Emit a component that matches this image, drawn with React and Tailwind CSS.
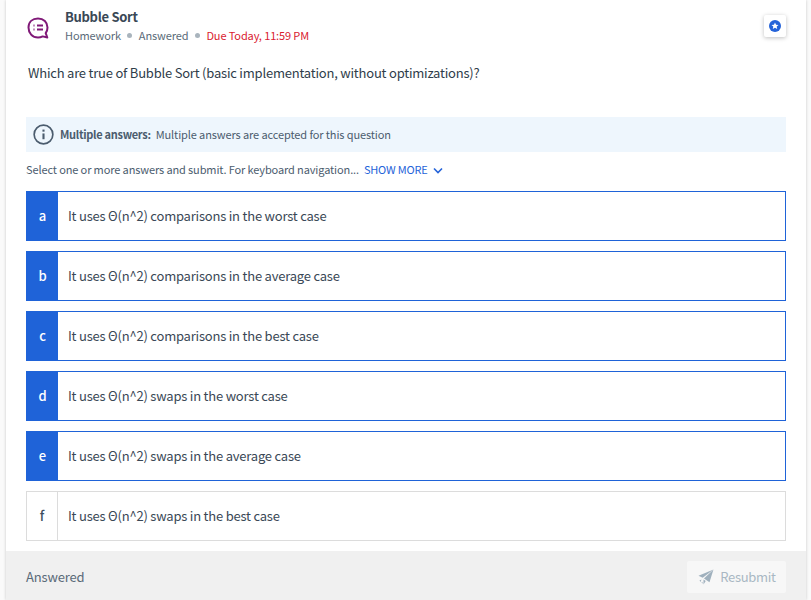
import React from 'react';

const answers = [
    { key: 'a', text: 'It uses Θ(n^2) comparisons in the worst case', checked: true },
    { key: 'b', text: 'It uses Θ(n^2) comparisons in the average case', checked: true },
    { key: 'c', text: 'It uses Θ(n^2) comparisons in the best case', checked: true },
    { key: 'd', text: 'It uses Θ(n^2) swaps in the worst case', checked: true },
    { key: 'e', text: 'It uses Θ(n^2) swaps in the average case', checked: true },
    { key: 'f', text: 'It uses Θ(n^2) swaps in the best case', checked: false },
];

/* ─── SVG Icons ─── */
const QuestionIcon = () => (
    <svg width="24" height="24" viewBox="0 0 24 24" fill="none" stroke="#801a78" strokeWidth="2">
        <path d="M12 2.500c5.600 0 9.500 3.900 9.500 9 0 2.300-.7 4.200-1.800 5.700l1.600 4.300-4.600-1.100c-1.400.7-3 1.100-4.700 1.100-5.600 0-9.500-4.400-9.500-10s3.900-9 9.500-9z" strokeLinejoin="round" />
        <path d="M11 9.500h6M11 13.500h6" strokeWidth="1.800" />
        <path d="M7.500 9.500h1M7.500 13.500h1" strokeWidth="1.800" />
    </svg>
);

const StarBadge = () => (
    <svg width="12" height="12" viewBox="0 0 12 12">
        <circle cx="6" cy="6" r="6" fill="#2563d9" />
        <path d="M6 2.400l1.050 2.250 2.450.3-1.800 1.650.5 2.400L6 7.800 3.800 9l.5-2.400L2.500 4.950l2.450-.3z" fill="#fff" />
    </svg>
);

const InfoIcon = () => (
    <svg width="21" height="21" viewBox="0 0 20 20" fill="none" stroke="#4b5c6e" strokeWidth="1.600">
        <circle cx="10" cy="10" r="8.900" />
        <path d="M10 9v5.500" strokeWidth="2" />
        <path d="M10 5.300v2" strokeWidth="2" />
    </svg>
);

const ChevronIcon = () => (
    <svg width="10" height="7" viewBox="0 0 10 7" fill="none" stroke="#2563d9" strokeWidth="1.600">
        <path d="M1 1.500l4 4 4-4" />
    </svg>
);

const SendIcon = () => (
    <svg width="16" height="16" viewBox="0 0 16 16" fill="#9fb0bd">
        <path d="M15.500 0.500L0.500 6.800l4.200 2L15.500 0.500z" />
        <path d="M15.500 0.500L6 9.500l5.500 3.700L15.500 0.500z" />
        <path d="M5.500 10.500l2.200 1.500-2.200 3.500z" />
        <path d="M1.500 11.500l2-1-1 2.500zM3.500 13.500l1-.8v2z" />
    </svg>
);

function Answer({ answer }) {
    return (
        <div className={`flex h-[50px] border bg-white ${answer.checked ? 'border-[#1f63d8]' : 'border-[#dcdcdc]'}`}>
            <div className={`flex w-[31px] shrink-0 items-center justify-center text-[13px] font-medium ${answer.checked ? 'bg-[#1f63d8] text-white' : 'border-r border-[#dcdcdc] text-[#3d4f60]'}`}>
                {answer.key}
            </div>
            <div className="flex items-center pl-[10px] text-[13px] tracking-[-0.21px] text-[#3a4856]">
                {answer.text}
            </div>
        </div>
    );
}

export default function App() {
    return (
        <div className="h-[600px] w-[811px] overflow-hidden bg-[#fafafa] font-['Noto_Sans_CJK_SC','Noto_Sans',sans-serif]">
            <div className="ml-[6px] flex h-[600px] w-[800px] flex-col bg-white shadow-[0_0_3px_rgba(0,0,0,0.2)]">
                <div className="flex-1 px-[20px]">
                    <div className="flex justify-between pt-[8px]">
                        <div className="flex">
                            <div className="pt-[8px] pr-[15px]">
                                <QuestionIcon />
                            </div>
                            <div>
                                <div className="text-[13px] leading-[18px] font-semibold tracking-[-0.3px] text-[#3a4856]">Bubble Sort</div>
                                <div className="flex items-center text-[11px] leading-[18px] tracking-[-0.12px] text-[#5a6a78]">
                                    <span>Homework</span>
                                    <span className="mx-[6.500px] h-[5px] w-[5px] rounded-full bg-[#a9b4bd]" />
                                    <span>Answered</span>
                                    <span className="mx-[6.500px] h-[5px] w-[5px] rounded-full bg-[#a9b4bd]" />
                                    <span className="text-[#d9202f]">Due Today, 11:59 PM</span>
                                </div>
                            </div>
                        </div>
                        <div className="mt-[7px] flex h-[22px] w-[22px] items-center justify-center rounded-[2px] bg-white shadow-[0_1px_4px_rgba(0,0,0,0.25)]">
                            <StarBadge />
                        </div>
                    </div>

                    <p className="mt-[19px] pl-[2px] text-[13px] leading-[20px] tracking-[-0.21px] text-[#2f3d4a]">
                        Which are true of Bubble Sort (basic implementation, without optimizations)?
                    </p>

                    <div className="mt-[34px] flex h-[35px] items-center bg-[#eef6fd] pl-[7px] text-[11px] tracking-[-0.11px] text-[#4b5c6e]">
                        <InfoIcon />
                        <span className="ml-[6px] font-semibold tracking-[-0.3px]">Multiple answers:</span>
                        <span className="ml-[5px]">Multiple answers are accepted for this question</span>
                    </div>

                    <div className="mt-[8px] flex h-[18px] items-center text-[11px] tracking-[-0.12px] text-[#4b5c6e]">
                        <span>Select one or more answers and submit. For keyboard navigation...</span>
                        <span className="ml-[5px] tracking-[-0.2px] text-[#2563d9]">SHOW MORE</span>
                        <span className="ml-[6px] mt-[2px]"><ChevronIcon /></span>
                    </div>

                    <div className="mt-[13px] flex flex-col gap-[10px]">
                        {answers.map((answer) => (
                            <Answer key={answer.key} answer={answer} />
                        ))}
                    </div>
                </div>

                <div className="flex h-[49px] items-start justify-between bg-[#f0f0f0] pt-[10px] pr-[20px] pl-[20px]">
                    <span className="text-[13px] leading-[32px] tracking-[-0.15px] text-[#5a6a78]">Answered</span>
                    <button className="flex h-[32px] w-[99px] items-center justify-center gap-[6px] rounded-[2px] bg-[#f7f7f7] pl-[1px] text-[13px] tracking-[-0.3px] text-[#a9b7c3]">
                        <SendIcon />
                        Resubmit
                    </button>
                </div>
            </div>
        </div>
    );
}
